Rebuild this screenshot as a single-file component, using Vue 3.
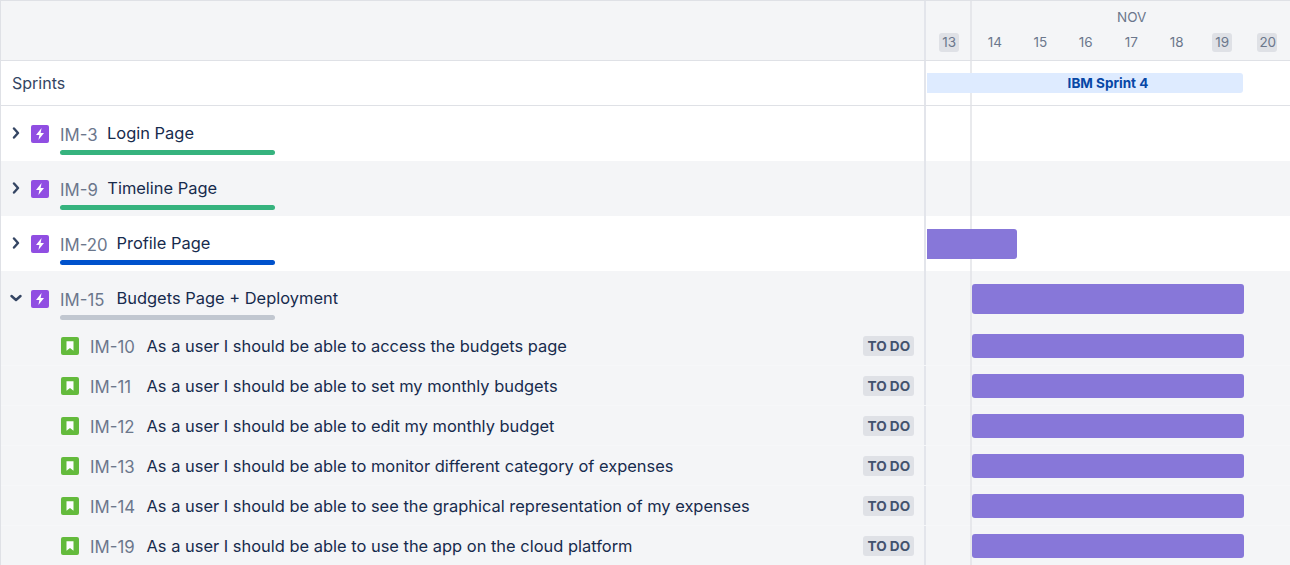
<template>
  <div class="roadmap">
    <div class="row header">
      <div class="left"></div>
      <div class="right head-right">
        <div class="month">NOV</div>
        <div class="days">
          <span v-for="d in days" :key="d.n" class="day-cell">
            <span :class="['day', { weekend: d.off }]">{{ d.n }}</span>
          </span>
        </div>
      </div>
    </div>

    <div class="row sprints">
      <div class="left sprints-title">Sprints</div>
      <div class="right">
        <div class="sprint-bar">IBM Sprint 4</div>
      </div>
    </div>

    <div
      v-for="epic in epics"
      :key="epic.key"
      :class="['row', 'epic', { grey: epic.grey }]"
    >
      <div class="left epic-left">
        <svg class="chevron" width="12" height="12" viewBox="0 0 12 12">
          <path v-if="epic.open" d="M1.500 4l4.500 4 4.500-4" />
          <path v-else d="M4 1.500l4 4.500-4 4.500" />
        </svg>
        <svg class="type-icon" width="18" height="18" viewBox="0 0 18 18">
          <rect width="18" height="18" rx="2" fill="#904EE2" />
          <path d="M10.600 3L5 10h3.400L7.400 15 13 8H9.600z" fill="#fff" />
        </svg>
        <div class="epic-body">
          <div class="epic-text">
            <span :class="['issue-key', { wide: epic.key.length > 4 }]">{{ epic.key }}</span>
            <span class="summary">{{ epic.title }}</span>
          </div>
          <div class="progress" :style="{ background: epic.color }"></div>
        </div>
      </div>
      <div class="right">
        <div
          v-if="epic.bar"
          :class="['bar', 'epic-bar', { clipped: epic.clipped }]"
          :style="{ marginLeft: epic.bar[0] + 'px', width: epic.bar[1] + 'px' }"
        ></div>
      </div>
    </div>

    <div v-for="story in stories" :key="story.key" class="row story grey">
      <div class="left story-left">
        <svg class="type-icon" width="18" height="18" viewBox="0 0 18 18">
          <rect width="18" height="18" rx="2" fill="#63BA3C" />
          <path d="M5.500 4.200h7v9.600L9 11l-3.500 2.800z" fill="#fff" />
        </svg>
        <span class="issue-key">{{ story.key }}</span>
        <span class="summary story-title">{{ story.title }}</span>
        <span class="lozenge">TO DO</span>
      </div>
      <div class="right">
        <div class="bar story-bar"></div>
      </div>
    </div>
  </div>
</template>

<script setup>
const days = [
  { n: 13, off: true },
  { n: 14 },
  { n: 15 },
  { n: 16 },
  { n: 17 },
  { n: 18 },
  { n: 19, off: true },
  { n: 20, off: true }
];

const epics = [
  { key: 'IM-3', title: 'Login Page', color: '#36B37E' },
  { key: 'IM-9', title: 'Timeline Page', color: '#36B37E', grey: true },
  { key: 'IM-20', title: 'Profile Page', color: '#0052CC', bar: [1, 90], clipped: true },
  { key: 'IM-15', title: 'Budgets Page + Deployment', color: '#C1C7D0', grey: true, open: true, bar: [46, 272] }
];

const stories = [
  { key: 'IM-10', title: 'As a user I should be able to access the budgets page' },
  { key: 'IM-11', title: 'As a user I should be able to set my monthly budgets' },
  { key: 'IM-12', title: 'As a user I should be able to edit my monthly budget' },
  { key: 'IM-13', title: 'As a user I should be able to monitor different category of expenses' },
  { key: 'IM-14', title: 'As a user I should be able to see the graphical representation of my expenses' },
  { key: 'IM-19', title: 'As a user I should be able to use the app on the cloud platform' }
];
</script>

<style>
html,
body {
  margin: 0;
  background: #fff;
  overflow: hidden;
}
</style>

<style scoped>
.roadmap {
  position: relative;
  width: 1290px;
  height: 565px;
  overflow: hidden;
  font-family: Inter, "Liberation Sans", sans-serif;
  color: #172B4D;
  box-sizing: border-box;
  border-left: 1px solid #DFE1E6;
}

/* linea de hoy */
.roadmap::after {
  content: '';
  position: absolute;
  top: 1px;
  bottom: 0;
  left: 969px;
  width: 2px;
  background: #DFE1E6;
  opacity: 0.7;
  z-index: 0;
}

.row {
  display: flex;
  box-sizing: border-box;
}

.grey {
  background: #F4F5F7;
}

.left {
  width: 923px;
  flex: none;
  box-sizing: border-box;
}

.right {
  flex: 1;
  min-width: 0;
  border-left: 2px solid #E3E5EB;
  box-sizing: border-box;
  position: relative;
}

.header {
  height: 61px;
  background: #F4F5F7;
  border-top: 1px solid #DFE1E6;
  border-bottom: 1px solid #DFE1E6;
}

.head-right {
  display: flex;
  flex-direction: column;
  align-items: stretch;
}

.month {
  height: 16px;
  margin-top: 8px;
  padding-left: 191px;
  font-size: 13.5px;
  line-height: 16px;
  color: #6B778C;
}

.days {
  display: flex;
  margin-top: 8px;
}

.day-cell {
  width: 45.5px;
  flex: none;
  display: flex;
  justify-content: center;
}

.day {
  width: 20px;
  height: 19px;
  border-radius: 3px;
  font-size: 13.5px;
  line-height: 19px;
  text-align: center;
  text-indent: 1px;
  color: #6B778C;
}

.day.weekend {
  background: #DFE1E6;
}

.sprints {
  height: 45px;
  border-bottom: 1px solid #DFE1E6;
}

.sprints-title {
  padding-left: 11px;
  font-size: 16px;
  line-height: 44px;
  color: #344563;
}

.sprint-bar {
  position: relative;
  z-index: 1;
  width: 316px;
  height: 20px;
  margin: 12px 0 0 1px;
  background: #DEEBFF;
  border-radius: 0 3px 3px 0;
  color: #0747A6;
  font-size: 13.5px;
  font-weight: 700;
  line-height: 20px;
  text-align: center;
  padding-left: 46px;
  box-sizing: border-box;
}

.epic {
  height: 55px;
}

.epic-left {
  display: flex;
  align-items: flex-start;
  padding: 19px 0 0 9px;
}

.chevron {
  margin-top: 2px;
  fill: none;
  stroke: #344563;
  stroke-width: 2.4;
  stroke-linecap: round;
  stroke-linejoin: round;
}

.type-icon {
  flex: none;
}

.epic-left .type-icon {
  margin-left: 9px;
}

.epic-body {
  margin-left: 11px;
  width: 215px;
  margin-top: -3px;
}

.epic-text {
  display: flex;
  white-space: nowrap;
  height: 24px;
  align-items: center;
}

.issue-key {
  flex: none;
  font-size: 16.8px;
  color: #6B778C;
  margin-top: 1px;
}

.issue-key.wide {
  width: 47px;
}

.summary {
  flex: none;
  font-size: 16.44px;
  color: #172B4D;
  margin-left: 9.5px;
  margin-top: -2px;
}

.progress {
  height: 5px;
  border-radius: 3px;
  margin-top: 4px;
}

.story {
  height: 40px;
  border-bottom: 1px solid #F6F7F9;
}

.story-left {
  display: flex;
  align-items: center;
  padding: 0 10px 0 60px;
}

.story-left .issue-key {
  margin-left: 11px;
  margin-top: 2px;
  width: 46px;
}

.story-title {
  flex: 1;
  white-space: nowrap;
  margin-left: 10.5px;
  margin-top: 0;
}

.lozenge {
  padding: 0 5px;
  width: 51.5px;
  flex: none;
  box-sizing: border-box;
  height: 20px;
  border-radius: 3px;
  background: #DFE1E6;
  color: #42526E;
  font-size: 13.6px;
  font-weight: 700;
  line-height: 20px;
  white-space: nowrap;
}

.bar {
  position: relative;
  z-index: 1;
  background: #8777D9;
  border-radius: 3px;
}

.epic-bar {
  height: 30px;
  margin-top: 13px;
}

.epic-bar.clipped {
  border-radius: 0 3px 3px 0;
}

.story-bar {
  width: 272px;
  height: 24px;
  margin: 8px 0 0 46px;
}
</style>
